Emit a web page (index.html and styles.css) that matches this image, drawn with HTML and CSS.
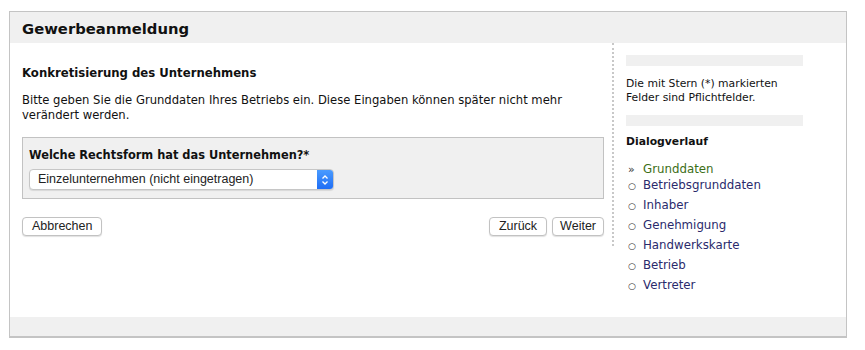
FILE: index.html
```html
<!DOCTYPE html>
<html lang="de">
<head>
    <meta charset="UTF-8">
    <title>Gewerbeanmeldung</title>
    <link rel="stylesheet" href="styles.css">
</head>
<body>
    <div class="dialog">
        <div class="dialog-header">
            <h1>Gewerbeanmeldung</h1>
        </div>
        <div class="dialog-body">
            <div class="main">
                <h2>Konkretisierung des Unternehmens</h2>
                <p class="intro">Bitte geben Sie die Grunddaten Ihres Betriebs ein. Diese Eingaben können später nicht mehr verändert werden.</p>

                <div class="question">
                    <label for="rechtsform">Welche Rechtsform hat das Unternehmen?*</label>
                    <div class="select">
                        <span class="select-value" id="rechtsform">Einzelunternehmen (nicht eingetragen)</span>
                        <span class="select-arrow">
                            <svg width="8" height="12" viewBox="0 0 8 12"><path d="M1.5 4.5 L4 2 L6.5 4.5 M1.5 7.5 L4 10 L6.5 7.5" fill="none" stroke="#fff" stroke-width="1.3"/></svg>
                        </span>
                    </div>
                </div>

                <div class="actions">
                    <button type="button">Abbrechen</button>
                    <div class="actions-right">
                        <button type="button">Zurück</button>
                        <button type="button" class="narrow">Weiter</button>
                    </div>
                </div>
            </div>

            <div class="sidebar">
                <div class="bar"></div>
                <p class="hint">Die mit Stern (*) markierten Felder sind Pflichtfelder.</p>
                <div class="bar"></div>
                <h3>Dialogverlauf</h3>
                <ul class="steps">
                    <li class="current"><span class="mark">»</span>Grunddaten</li>
                    <li><span class="mark">○</span>Betriebsgrunddaten</li>
                    <li><span class="mark">○</span>Inhaber</li>
                    <li><span class="mark">○</span>Genehmigung</li>
                    <li><span class="mark">○</span>Handwerkskarte</li>
                    <li><span class="mark">○</span>Betrieb</li>
                    <li><span class="mark">○</span>Vertreter</li>
                </ul>
            </div>
        </div>
        <div class="dialog-footer"></div>
    </div>
</body>
</html>
```

FILE: styles.css
```css
body {
    margin: 11px 0 0 9px;
    font-family: 'DejaVu Sans', Verdana, sans-serif;
    color: #111;
    background: #fff;
}
.dialog {
    width: 836px;
    border: 1px solid #c4c4c4;
    border-bottom-width: 2px;
    background: #fff;
}
.dialog-header {
    background: #f0f0f0;
    height: 31px;
    padding: 0 12px;
}
.dialog-header h1 {
    margin: 0;
    font-size: 14.8px;
    line-height: 33px;
    font-weight: bold;
}
.dialog-body {
    display: flex;
    align-items: flex-start;
}
.main {
    width: 582px;
    padding: 22px 8px 10px 12px;
    border-right: 2px dotted #c8c8c8;
}
.main h2 {
    margin: 0 0 12px;
    font-size: 11.7px;
    line-height: 16px;
}
.intro {
    margin: 0 0 14px;
    font-size: 11.6px;
    line-height: 15px;
}
.question {
    background: #f0f0f0;
    border: 1px solid #c2c2c2;
    padding: 8px 3px 8px 6px;
}
.question label {
    display: block;
    margin: 0 0 5px;
    font-size: 11.4px;
    font-weight: bold;
    line-height: 18px;
}
.select {
    display: flex;
    width: 303px;
    height: 19px;
    background: #fff;
    border: 1px solid #c6c6c6;
    border-radius: 4px;
    box-shadow: 0 1px 1px rgba(0, 0, 0, 0.1);
    font-family: 'Liberation Sans', Arial, sans-serif;
    font-size: 12.5px;
    overflow: hidden;
}
.select-value {
    flex: 1;
    padding-left: 8px;
    line-height: 19px;
    color: #222;
}
.select-arrow {
    width: 16px;
    background: linear-gradient(#4a9bff, #1f6ef5);
    display: flex;
    align-items: center;
    justify-content: center;
}
.actions {
    display: flex;
    justify-content: space-between;
    margin-top: 18px;
}
.actions-right {
    display: flex;
    gap: 5px;
}
.actions button {
    font-family: 'Liberation Sans', Arial, sans-serif;
    font-size: 12.5px;
    color: #222;
    background: #fff;
    border: 1px solid #c2c2c2;
    border-radius: 4px;
    box-shadow: 0 1px 1px rgba(0, 0, 0, 0.12);
    height: 19px;
    padding: 0 9px;
    line-height: 17px;
}
.actions button.narrow {
    padding: 0 7px;
}
.sidebar {
    width: 177px;
    padding: 12px 0 22px 12px;
    font-size: 10.8px;
}
.bar {
    height: 11px;
    background: #f0f0f0;
}
.hint {
    margin: 11px 0 10px;
    line-height: 14px;
}
.sidebar h3 {
    margin: 9px 0 14px;
    font-size: 10.8px;
    line-height: 14px;
}
.steps {
    list-style: none;
    margin: 0;
    padding: 0 0 0 2px;
    font-size: 11.8px;
    color: #2a2a6c;
}
.steps li {
    height: 20px;
    line-height: 20px;
    white-space: nowrap;
}
.steps li.current {
    color: #3c6e16;
    height: 12px;
    line-height: 12px;
}
.steps .mark {
    display: inline-block;
    width: 15px;
    font-size: 9px;
    color: #333;
}
.steps .current .mark {
    font-size: 11px;
}
.dialog-footer {
    height: 19px;
    background: #f0f0f0;
}
```
